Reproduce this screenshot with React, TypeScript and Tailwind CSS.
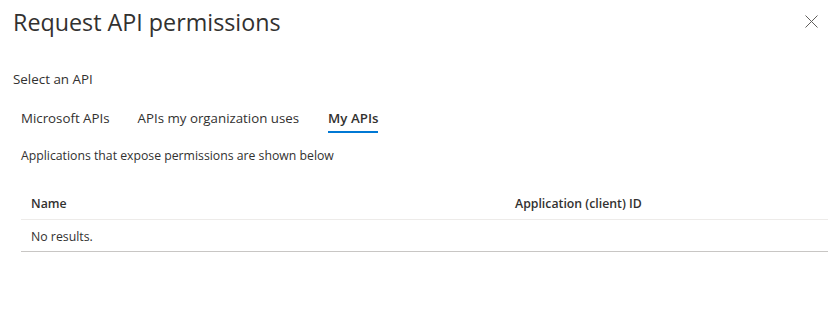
import React from 'react';

const tabs = [
    { label: 'Microsoft APIs', active: false },
    { label: 'APIs my organization uses', active: false },
    { label: 'My APIs', active: true },
];

export default function App() {
    return (
        <div className="w-[840px] h-[313px] bg-white text-[#323130] font-['Segoe_UI','Open_Sans',sans-serif] overflow-hidden">
            {/* Header */}
            <div className="flex items-start justify-between pl-[13px] pr-[22px] pt-[6px]">
                <h1 className="text-[23.3px] leading-[32px] font-normal">Request API permissions</h1>
                <button className="mt-[9px] w-[13px] h-[13px] text-[#605e5c]">
                    <svg viewBox="0 0 13 13" width="13" height="13" fill="none" stroke="currentColor" strokeWidth="1">
                        <path d="M0.5 0.5 L12.5 12.5 M12.5 0.5 L0.5 12.5" />
                    </svg>
                </button>
            </div>

            <p className="pl-[13px] mt-[31px] text-[13.4px] leading-[20px]">Select an API</p>

            {/* Tabs */}
            <div className="flex gap-[28px] pl-[21px] mt-[19px]">
                {tabs.map(t => (
                    <div key={t.label} className={`flex flex-col ${t.active ? 'ml-[1px]' : ''}`}>
                        <span className={`text-[13.3px] leading-[20px] ${t.active ? 'font-semibold' : ''}`}>{t.label}</span>
                        <div className={`h-[2px] mt-[3px] ${t.active ? 'bg-[#0078d4]' : 'bg-transparent'}`} />
                    </div>
                ))}
            </div>

            <p className="pl-[21px] mt-[14px] text-[12.25px] leading-[18px]">Applications that expose permissions are shown below</p>

            {/* Table */}
            <div className="ml-[21px] mr-[12px] mt-[21px] text-[12.3px]">
                <div className="grid grid-cols-[494px_1fr] h-[34px] pt-[4px] items-center border-b border-[#edebe9]">
                    <span className="pl-[10px] font-semibold">Name</span>
                    <span className="font-semibold">Application (client) ID</span>
                </div>
                <div className="h-[32px] flex items-center pt-[4px] pl-[10px] border-b border-[#c8c6c4]">
                    No results.
                </div>
            </div>
        </div>
    );
}
